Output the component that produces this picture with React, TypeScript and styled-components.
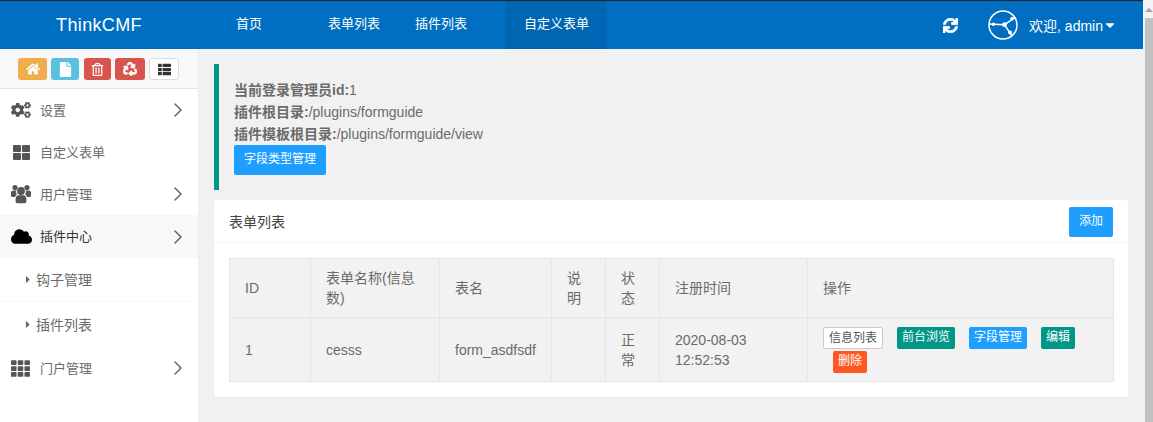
import React from 'react';
import styled, { createGlobalStyle } from 'styled-components';
import { FaHome, FaFile, FaRegTrashAlt, FaRecycle, FaThList, FaCogs, FaTh, FaThLarge, FaCloud, FaSync, FaCaretDown, FaCaretRight } from 'react-icons/fa';
import { ChevronRight } from 'lucide-react';

const Global = createGlobalStyle`
  html, body { margin: 0; padding: 0; height: 422px; overflow: hidden; background: #f1f1f1; }
  body { font-family: "Liberation Sans", "Noto Sans CJK SC", sans-serif; font-size: 14px; color: #6b6b6b; }
`;
const Shell = styled.div`display: flex; width: 1153px; height: 422px; overflow: hidden;`;
const Page = styled.div`width: 1143px; display: flex; flex-direction: column; flex: none;`;
const Scrollbar = styled.div`width: 10px; background: #f3f3f3; display: flex; flex-direction: column; align-items: flex-end; box-sizing: border-box; padding-top: 8px;`;
const ScrollArrow = styled.div`width: 0; height: 0; margin-right: 0; border-left: 4px solid transparent; border-right: 4px solid transparent; border-bottom: 4px solid #a3a3a3;`;
const ScrollThumb = styled.div`width: 8px; flex: 1; background: #c1c1c1; margin-top: 6px;`;
const TopBar = styled.header`height: 48px; background: #006fc2; border-top: 1px solid #1b2430; display: flex; color: #fff; flex: none;`;
const Logo = styled.div`width: 198px; font-size: 18px; letter-spacing: 0.35px; text-align: center; line-height: 48px; flex: none;`;
const Nav = styled.nav`display: flex; padding-left: 20px;`;
const NavItem = styled.div<{ $active?: boolean; $pad: number; $gap?: number }>`
  padding: 0 ${p => p.$pad}px; margin-left: ${p => p.$gap ?? 0}px; font-size: 13px; line-height: 46px;
  background: ${p => (p.$active ? '#0066b3' : 'transparent')};
`;
const Right = styled.div`margin-left: auto; display: flex; align-items: center; padding-right: 26px;`;
const Refresh = styled(FaSync)`width: 15px; height: 15px; margin-right: 30px; stroke: #fff; stroke-width: 28;`;
const Avatar = styled.svg`width: 30px; height: 30px; margin-right: 11px;`;
const Welcome = styled.span`font-size: 14px; display: flex; align-items: center;`;
const Body = styled.div`display: flex; flex: 1; min-height: 0;`;
const Side = styled.aside`width: 198px; background: #fff; flex: none; border-right: 1px solid #ececec;`;
const Shortcuts = styled.div`height: 40px; background: #f8f8f8; border-bottom: 1px solid #e4e4e4; display: flex; padding: 9px 0 0 18px; gap: 4px; box-sizing: border-box;`;
const Shortcut = styled.span<{ $bg: string; $w: number; $light?: boolean; $gap?: number; $size?: number }>`
  width: ${p => p.$w}px; height: 22px; border-radius: 3px; background: ${p => p.$bg}; color: ${p => (p.$light ? '#333' : '#fff')};
  margin-left: ${p => p.$gap ?? 0}px;
  border: ${p => (p.$light ? '1px solid #ddd' : 'none')}; box-sizing: border-box; display: flex; align-items: center; justify-content: center; font-size: ${p => p.$size ?? 13}px;
`;
const BoldRecycle = styled(FaRecycle)`stroke: #fff; stroke-width: 30;`;
const Item = styled.div<{ $open?: boolean; $h?: number }>`
  height: ${p => p.$h ?? 42}px; display: flex; align-items: center; padding: 0 8px 0 11px; background: ${p => (p.$open ? '#f8f8f8' : 'transparent')};
  color: ${p => (p.$open ? '#333' : '#6b6b6b')}; font-size: 13px; box-sizing: border-box;
`;
const ItemIcon = styled.span<{ $open?: boolean; $size?: number; $pad?: number }>`width: 29px; flex: none; display: flex; padding-left: ${p => p.$pad ?? 0}px; box-sizing: border-box; font-size: ${p => p.$size ?? 20}px; color: ${p => (p.$open ? '#000' : '#555')};`;
const Label = styled.span`flex: 1; padding-bottom: 2px;`;
const Chevron = styled(ChevronRight)`color: #666; flex: none;`;
const SubItem = styled.div<{ $line?: boolean; $h: number }>`
  height: ${p => p.$h}px; display: flex; align-items: center; padding-left: 25px; padding-bottom: 1px; font-size: 14px; color: #6b6b6b;
  border-bottom: ${p => (p.$line ? '1px solid #f9f9f9' : 'none')}; box-sizing: border-box;
`;
const Caret = styled(FaCaretRight)`font-size: 11px; width: 6px; margin-right: 5px; color: #666; flex: none;`;
const Main = styled.main`flex: 1; padding: 15px 15px 0 15px; min-width: 0;`;
const Notice = styled.div`border-left: 5px solid #009688; padding: 15px 0 0 15px; height: 126px; box-sizing: border-box; line-height: 22px; margin-bottom: 10px;`;
const Strong = styled.b`font-weight: 700;`;
const Blue = styled.span`display: inline-block; background: #1e9fff; color: #fff; border-radius: 2px; font-size: 12px; height: 30px; line-height: 29px; padding: 0 10px; vertical-align: top;`;
const Card = styled.section`background: #fff; border-radius: 2px; box-shadow: 0 1px 2px rgba(0,0,0,.05);`;
const CardHead = styled.div`height: 42px; border-bottom: 1px solid #f6f6f6; display: flex; align-items: center; justify-content: space-between; padding: 0 15px; font-size: 14px; color: #444; box-sizing: content-box;`;
const AddBtn = styled(Blue)`margin-top: 2px;`;
const CardBody = styled.div`padding: 15px;`;
const Table = styled.table`width: 884px; border-collapse: collapse; background: #f2f2f2; table-layout: fixed;`;
const Th = styled.th<{ $w: number }>`width: ${p => p.$w}px; font-weight: 400; text-align: left; border: 1px solid #e6e6e6; padding: 9px 15px; line-height: 20px; font-size: 14px; color: #6b6b6b; box-sizing: border-box; height: 59px;`;
const Td = styled.td`border: 1px solid #e6e6e6; padding: 9px 15px; line-height: 20px; font-size: 14px; color: #6b6b6b; height: 64px; box-sizing: border-box;`;
const Actions = styled.td`border: 1px solid #e6e6e6; padding: 9px 15px 8px; height: 64px; box-sizing: border-box;`;
const Tag = styled.span<{ $bg?: string }>`
  display: inline-block; height: 22px; line-height: 21px; padding: 0 5px; font-size: 12px; border-radius: 2px; margin-right: 14px; vertical-align: top;
  background: ${p => p.$bg ?? '#fff'}; color: ${p => (p.$bg ? '#fff' : '#555')}; border: ${p => (p.$bg ? 'none' : '1px solid #c9c9c9')}; box-sizing: border-box;
`;
const TagRow = styled.div`display: block; line-height: 23px; white-space: normal; font-size: 0;`;
const IndentTag = styled(Tag)`margin-left: 10px; margin-top: 1px;`;

export default function App() {
  return (
    <Shell>
      <Global />
      <Page>
        <TopBar>
          <Logo>ThinkCMF</Logo>
          <Nav>
            <NavItem $pad={18}>首页</NavItem>
            <NavItem $pad={14} $gap={34}>表单列表</NavItem>
            <NavItem $pad={14} $gap={7}>插件列表</NavItem>
            <NavItem $pad={18} $gap={25} $active>自定义表单</NavItem>
          </Nav>
          <Right>
            <Refresh />
            <Avatar viewBox="0 0 30 30" fill="none" stroke="#fff" strokeWidth="1.5">
              <circle cx="15" cy="15" r="14" />
              <path d="M1 14 L16.5 14.7 L27 7.5 M16.5 14.7 L24 26" />
              <circle cx="16.5" cy="14.7" r="2.4" fill="#fff" stroke="none" />
              <circle cx="5.5" cy="14.2" r="1.8" fill="#fff" stroke="none" />
              <circle cx="24" cy="8.7" r="1.8" fill="#fff" stroke="none" />
              <circle cx="22" cy="22.5" r="2" fill="#fff" stroke="none" />
            </Avatar>
            <Welcome>欢迎, admin <FaCaretDown size={14} /></Welcome>
          </Right>
        </TopBar>
        <Body>
          <Side>
            <Shortcuts>
              <Shortcut $bg="#f0ad4e" $w={29} $size={14}><FaHome /></Shortcut>
              <Shortcut $bg="#5bc0de" $w={28} $size={15}><FaFile /></Shortcut>
              <Shortcut $bg="#d9534f" $w={27} $gap={1} $size={13}><FaRegTrashAlt /></Shortcut>
              <Shortcut $bg="#d9534f" $w={30} $size={14}><BoldRecycle /></Shortcut>
              <Shortcut $bg="#fff" $w={30} $light $size={13}><FaThList /></Shortcut>
            </Shortcuts>
            <Item><ItemIcon><FaCogs /></ItemIcon><Label>设置</Label><Chevron size={24} strokeWidth={1.5} /></Item>
            <Item><ItemIcon $size={17} $pad={2}><FaThLarge /></ItemIcon><Label>自定义表单</Label></Item>
            <Item>
              <ItemIcon>
                <svg width="20" height="20" viewBox="0 0 20 20" fill="currentColor">
                  <circle cx="4" cy="3.5" r="2.6" />
                  <circle cx="16" cy="3.5" r="2.6" />
                  <path d="M0 8.5c0-1 1-2 2.2-2h3.2c-.6 1.500-.2 3 .6 4-.8.300-1.600 1.300-2 2.500H1.200C.5 13 0 12.500 0 11.800z" />
                  <path d="M20 8.500c0-1-1-2-2.200-2h-3.200c.6 1.500.2 3-.6 4 .8.300 1.600 1.300 2 2.500h2.800c.7 0 1.200-.5 1.200-1.200z" />
                  <circle cx="10" cy="7" r="3.900" />
                  <path d="M4.600 15c0-2.200 1.400-3.800 3-3.800h4.800c1.600 0 3 1.600 3 3.800v2.500c0 1-.8 1.700-1.700 1.700H6.300c-.9 0-1.700-.7-1.700-1.700z" />
                </svg>
              </ItemIcon>
              <Label>用户管理</Label><Chevron size={24} strokeWidth={1.5} />
            </Item>
            <Item $open $h={43}><ItemIcon $open $size={21}><FaCloud /></ItemIcon><Label>插件中心</Label><Chevron size={24} strokeWidth={1.5} /></Item>
            <SubItem $line $h={44}><Caret />钩子管理</SubItem>
            <SubItem $h={45}><Caret />插件列表</SubItem>
            <Item><ItemIcon $size={19}><FaTh /></ItemIcon><Label>门户管理</Label><Chevron size={24} strokeWidth={1.5} /></Item>
          </Side>
          <Main>
            <Notice>
              <div><Strong>当前登录管理员id:</Strong>1</div>
              <div><Strong>插件根目录:</Strong>/plugins/formguide</div>
              <div><Strong>插件模板根目录:</Strong>/plugins/formguide/view</div>
              <Blue>字段类型管理</Blue>
            </Notice>
            <Card>
              <CardHead>表单列表<AddBtn>添加</AddBtn></CardHead>
              <CardBody>
                <Table>
                  <thead>
                    <tr>
                      <Th $w={81}>ID</Th>
                      <Th $w={129}>表单名称(信息数)</Th>
                      <Th $w={112}>表名</Th>
                      <Th $w={54}>说明</Th>
                      <Th $w={54}>状态</Th>
                      <Th $w={148}>注册时间</Th>
                      <Th $w={306}>操作</Th>
                    </tr>
                  </thead>
                  <tbody>
                    <tr>
                      <Td>1</Td>
                      <Td>cesss</Td>
                      <Td>form_asdfsdf</Td>
                      <Td></Td>
                      <Td>正常</Td>
                      <Td>2020-08-03 12:52:53</Td>
                      <Actions>
                        <TagRow>
                          <Tag>信息列表</Tag>
                          <Tag $bg="#009688">前台浏览</Tag>
                          <Tag $bg="#1e9fff">字段管理</Tag>
                          <Tag $bg="#009688">编辑</Tag>
                          <IndentTag $bg="#ff5722">删除</IndentTag>
                        </TagRow>
                      </Actions>
                    </tr>
                  </tbody>
                </Table>
              </CardBody>
            </Card>
          </Main>
        </Body>
      </Page>
      <Scrollbar><ScrollArrow /><ScrollThumb /></Scrollbar>
    </Shell>
  );
}
